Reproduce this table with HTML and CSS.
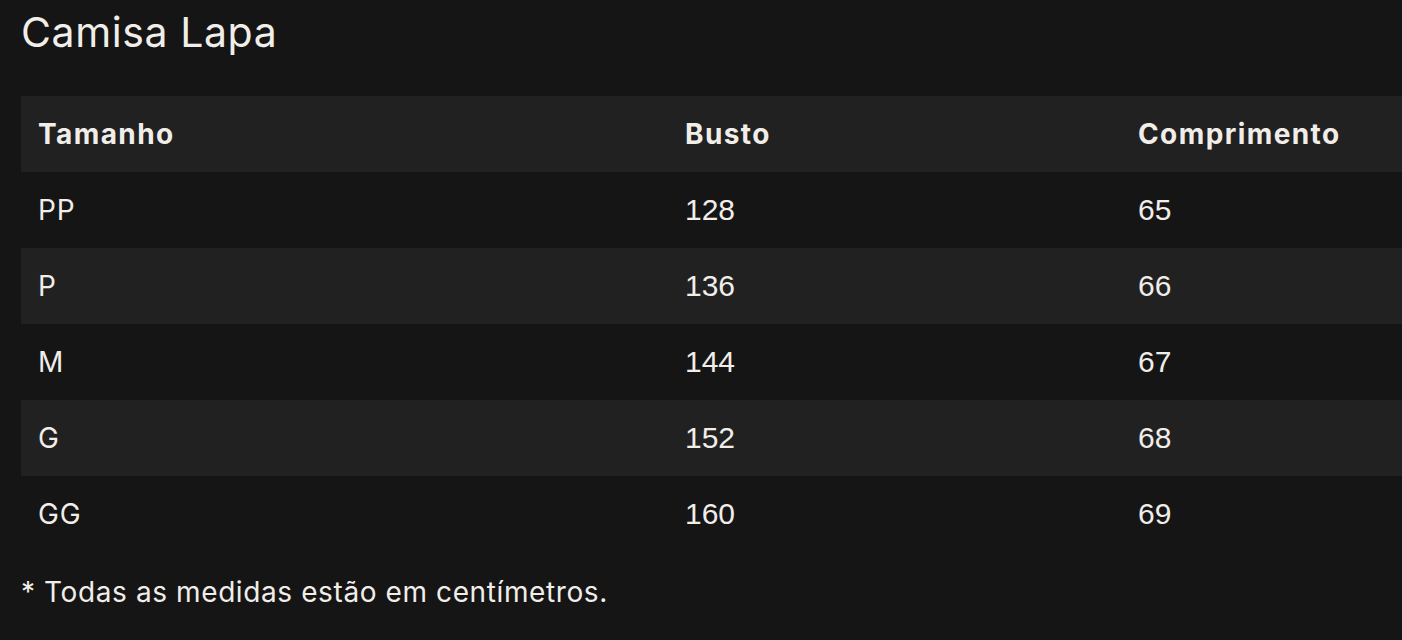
FILE: index.html
```html
<!DOCTYPE html>
<html lang="pt-BR">
<head>
<meta charset="utf-8">
<title>Camisa Lapa</title>
<link rel="stylesheet" href="styles.css">
</head>
<body>
<main class="page">
  <h1 class="title">Camisa Lapa</h1>
  <table class="sizes">
    <thead>
      <tr><th class="c1">Tamanho</th><th class="c2">Busto</th><th class="c3">Comprimento</th></tr>
    </thead>
    <tbody>
      <tr><td class="size">PP</td><td class="num">128</td><td class="num">65</td></tr>
      <tr><td class="size">P</td><td class="num">136</td><td class="num">66</td></tr>
      <tr><td class="size">M</td><td class="num">144</td><td class="num">67</td></tr>
      <tr><td class="size">G</td><td class="num">152</td><td class="num">68</td></tr>
      <tr><td class="size">GG</td><td class="num">160</td><td class="num">69</td></tr>
    </tbody>
  </table>
  <p class="note">* Todas as medidas estão em centímetros.</p>
</main>
</body>
</html>
```

FILE: styles.css
```css
html, body {
  margin: 0;
  padding: 0;
  background: #151515;
  overflow: hidden;
}
.page {
  padding-left: 21px;
  color: #f1ede9;
  font-family: Inter, "Open Sans", sans-serif;
}
.title {
  margin: 0;
  font-weight: 400;
  font-size: 41px;
  letter-spacing: 0.6px;
  line-height: 64px;
}
.sizes {
  margin-top: 32px;
  width: 1381px;
  border-collapse: collapse;
  table-layout: fixed;
}
.sizes th, .sizes td {
  height: 76px;
  padding: 0 0 0 17px;
  text-align: left;
  vertical-align: middle;
  box-sizing: border-box;
}
.c1 { width: 647px; }
.c2 { width: 453px; }
.sizes th {
  font-weight: 700;
  font-size: 28px;
  letter-spacing: 1.4px;
}
.sizes thead tr { background: #212121; }
.sizes tbody tr:nth-child(odd) { background: #151515; }
.sizes tbody tr:nth-child(even) { background: #212121; }
.size {
  font-size: 28px;
  letter-spacing: 0.8px;
}
.num {
  font-family: "Liberation Sans", Arial, sans-serif;
  font-size: 30px;
}
.note {
  margin: 20px 0 0;
  font-size: 28px;
  letter-spacing: 0.6px;
  line-height: 40px;
}
```
